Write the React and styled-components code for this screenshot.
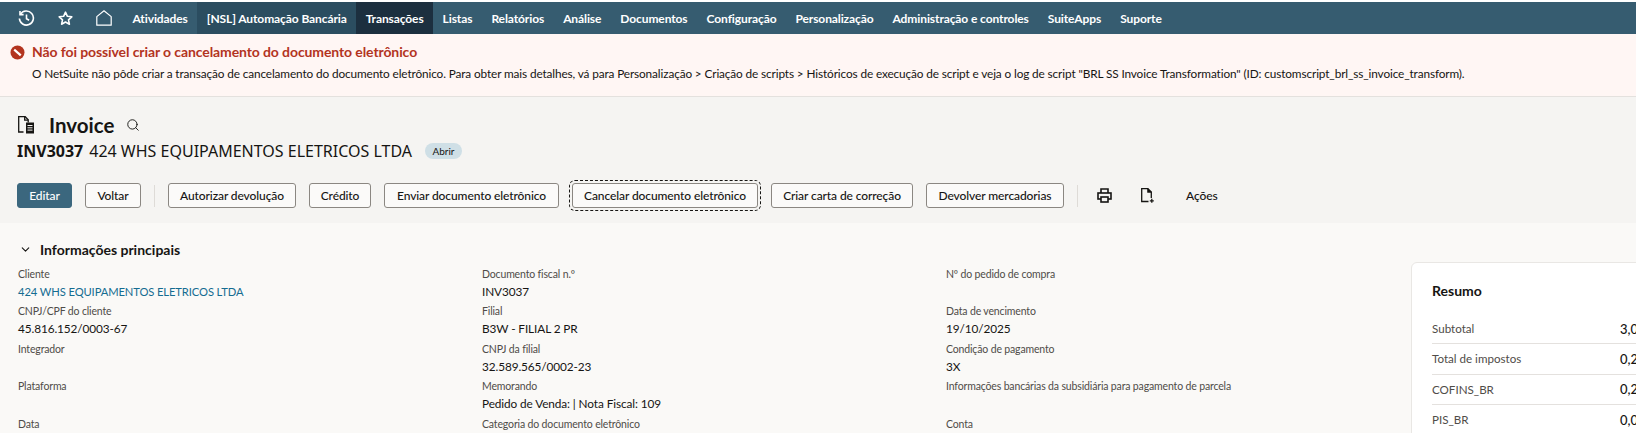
import React from 'react'
import styled, { createGlobalStyle } from 'styled-components'
import { ChevronDown, Search } from 'lucide-react'

const GlobalStyle = createGlobalStyle`
  html, body {
    margin: 0;
    padding: 0;
    background: #fff;
  }
  body {
    font-family: Lato, "Noto Sans", sans-serif;
    color: #161513;
  }
`

const Page = styled.div`
  width: 1636px;
  height: 433px;
  overflow: hidden;
  padding-top: 2px;
  box-sizing: border-box;
`

const Nav = styled.nav`
  height: 32px;
  background: #365c70;
  display: flex;
  align-items: stretch;
`
const NavIcons = styled.div`
  display: flex;
  align-items: center;
  width: 123px;
  padding-left: 18px;
  box-sizing: border-box;
  gap: 23px;
  color: #fff;
`
const NavItem = styled.a`
  display: flex;
  align-items: center;
  padding: 0 9.5px;
  color: #fff;
  font-size: 12px;
  letter-spacing: -0.1px;
  font-weight: 700;
  background: ${p => p.$bg || 'transparent'};
`

const Message = styled.div`
  height: 63px;
  box-sizing: border-box;
  background: #fff6f4;
  border-bottom: 1px solid #e4e1de;
  padding: 9px 10px 0;
`
const MessageTitle = styled.div`
  display: flex;
  align-items: center;
  gap: 7px;
  font-size: 14px;
  letter-spacing: -0.1px;
  font-weight: 700;
  line-height: 18px;
  color: #b3341f;
`
const MessageBody = styled.div`
  margin: 4px 0 0 22px;
  font-size: 11.8px;
  letter-spacing: -0.12px;
  line-height: 18px;
  white-space: nowrap;
`

const Header = styled.header`
  height: 126px;
  box-sizing: border-box;
  background: #f5f4f2;
  padding: 17px 17px 0;
`
const TitleRow = styled.div`
  display: flex;
  align-items: center;
  height: 22px;
`
const Title = styled.h1`
  margin: 0 12px 0 14px;
  font-size: 20.5px;
  font-weight: 700;
  line-height: 22px;
`
const SubRow = styled.div`
  display: flex;
  align-items: center;
  height: 22px;
  margin-top: 4px;
  font-family: "Noto Sans", sans-serif;
  font-size: 16px;
`
const DocNumber = styled.strong`
  font-weight: 700;
  margin-right: 6px;
`
const Badge = styled.span`
  margin-left: 13px;
  width: 37px;
  height: 16px;
  border-radius: 8px;
  background: #cfdfe6;
  font-family: Lato, sans-serif;
  font-size: 10px;
  display: flex;
  align-items: center;
  justify-content: center;
`
const Actions = styled.div`
  display: flex;
  align-items: center;
  gap: 13px;
  margin-top: 21px;
`
const Button = styled.button`
  height: 25px;
  width: ${p => p.$w}px;
  box-sizing: border-box;
  padding: 0;
  border-radius: 3px;
  border: 1px solid ${p => (p.$primary ? '#3b677e' : '#8b8782')};
  background: ${p => (p.$primary ? '#3b677e' : '#fbfaf9')};
  color: ${p => (p.$primary ? '#fff' : '#161513')};
  font-family: inherit;
  font-size: 12px;
  letter-spacing: -0.1px;
  font-weight: 500;
  outline: ${p => (p.$focused ? '1px dashed #161513' : 'none')};
  outline-offset: 2px;
`
const Divider = styled.span`
  width: 1px;
  height: 22px;
  background: #dedbd7;
`
const IconButton = styled.span`
  display: flex;
  align-items: center;
  margin-left: ${p => p.$ml}px;
`
const ActionsLabel = styled.span`
  margin-left: 18px;
  font-size: 12px;
  letter-spacing: -0.1px;
  font-weight: 500;
`

const Main = styled.main`
  height: 210px;
  background: #faf9f7;
  padding: 16px 0 0 18px;
  display: flex;
  box-sizing: border-box;
`
const Details = styled.div`
  width: 1393px;
  flex: none;
`
const SectionHead = styled.div`
  display: flex;
  align-items: center;
  gap: 8px;
  height: 20px;
  font-size: 14px;
  font-weight: 700;
`
const Chevron = styled.span`
  display: flex;
  margin-left: 1px;
`
const Columns = styled.div`
  display: grid;
  grid-template-columns: repeat(3, 464px);
  margin-top: 6px;
`
const Col = styled.div`
  display: flex;
  flex-direction: column;
`
const Field = styled.div`
  height: 37.4px;
`
const Label = styled.div`
  height: 18px;
  line-height: 18px;
  font-size: 10.5px;
  letter-spacing: -0.15px;
  color: #4f4c48;
`
const Value = styled.div`
  height: 18px;
  line-height: 18px;
  font-size: ${p => (p.$link ? '11.2px' : '11.8px')};
  letter-spacing: -0.1px;
  color: ${p => (p.$link ? '#146c91' : '#161513')};
`

const Card = styled.aside`
  flex: none;
  width: 300px;
  height: 220px;
  margin-top: 23px;
  box-sizing: border-box;
  background: #fff;
  border: 1px solid #e9e7e4;
  border-radius: 6px;
  padding: 19px 20px;
`
const CardTitle = styled.div`
  font-size: 14px;
  font-weight: 700;
  line-height: 18px;
  margin-bottom: 14px;
`
const SummaryRow = styled.div`
  display: grid;
  grid-template-columns: 188px 1fr;
  align-items: center;
  height: 30.3px;
  box-sizing: border-box;
  border-bottom: 1px solid #e4e1de;
  font-size: 11.6px;
  color: #4f4c48;
`
const Amount = styled.span`
  font-size: 13px;
  font-weight: 500;
  color: #161513;
`

const HistoryIcon = () => (
  <svg width="17" height="17" viewBox="0 0 17 17" fill="none" stroke="currentColor" strokeWidth="1.6">
    <path d="M2.4 4.4A7 7 0 1 1 1.4 8.5" />
    <path d="M2 1v3.6h3.6" />
    <path d="M8.5 4.5v4.2l2.6 1.5" />
  </svg>
)
const StarIcon = () => (
  <svg width="15" height="15" viewBox="0 0 15 15" fill="none" stroke="currentColor" strokeWidth="1.6" strokeLinejoin="round">
    <path d="M7.5 1.2 9.4 5.3l4.4.5-3.3 3 .9 4.4-3.9-2.2-3.9 2.2.9-4.4-3.3-3 4.4-.5z" />
  </svg>
)
const HomeIcon = () => (
  <svg width="16" height="16" viewBox="0 0 16 16" fill="none" stroke="currentColor" strokeWidth="1.2" strokeLinejoin="round">
    <path d="M.8 6.6 8 .8l7.2 5.8v8.6H.8z" />
  </svg>
)
const InvoiceIcon = () => (
  <svg width="18" height="18" viewBox="0 0 18 18" fill="none" stroke="#161513" strokeWidth="1.3">
    <path d="M6.5 16H1.7V.7h6.5l3 3v2.8" />
    <path d="M7.7.7v3.5h3.5" />
    <rect x="9" y="6.5" width="8" height="11" fill="#161513" stroke="none" />
    <path d="M10.5 9.5h5M10.5 11.8h5M10.5 14.1h5" stroke="#f5f4f2" strokeWidth="1" />
  </svg>
)
const PrintIcon = () => (
  <svg width="15" height="15" viewBox="0 0 15 15" fill="none" stroke="#161513" strokeWidth="1.6">
    <path d="M4 5V1h7v4" />
    <rect x="1" y="5" width="13" height="6" />
    <rect x="4" y="9" width="7" height="5" fill="#f5f4f2" />
  </svg>
)
const NewDocIcon = () => (
  <svg width="14" height="15" viewBox="0 0 14 15" fill="none" stroke="#161513" strokeWidth="1.3">
    <path d="M7.5 13.5H.7V.7h6.2l3.4 3.4v6" />
    <path d="M6.9.7v3.4h3.4" fill="#161513" />
    <path d="M10.8 10.8v4M8.8 12.8h4" />
  </svg>
)
const ErrorIcon = () => (
  <svg width="15" height="15" viewBox="0 0 15 15">
    <circle cx="7.5" cy="7.5" r="7" fill="#b3341f" />
    <path d="M4.2 4.6 10.8 10.4" stroke="#fff" strokeWidth="2.2" />
  </svg>
)

const navItems = ['Atividades', '[NSL] Automação Bancária', 'Transações', 'Listas', 'Relatórios', 'Análise', 'Documentos', 'Configuração', 'Personalização', 'Administração e controles', 'SuiteApps', 'Suporte']
const navBg = { '[NSL] Automação Bancária': '#2b4d60', 'Transações': '#1c2f3f' }

const columns = [
  [['Cliente', '424 WHS EQUIPAMENTOS ELETRICOS LTDA', true], ['CNPJ/CPF do cliente', '45.816.152/0003-67'], ['Integrador'], ['Plataforma'], ['Data']],
  [['Documento fiscal n.º', 'INV3037'], ['Filial', 'B3W - FILIAL 2 PR'], ['CNPJ da filial', '32.589.565/0002-23'], ['Memorando', 'Pedido de Venda: | Nota Fiscal: 109'], ['Categoria do documento eletrônico']],
  [['Nº do pedido de compra'], ['Data de vencimento', '19/10/2025'], ['Condição de pagamento', '3X'], ['Informações bancárias da subsidiária para pagamento de parcela'], ['Conta']],
]

const summary = [['Subtotal', '3,00'], ['Total de impostos', '0,23'], ['COFINS_BR', '0,20'], ['PIS_BR', '0,03']]

const App = () => {
  return (
    <Page>
      <GlobalStyle />
      <Nav>
        <NavIcons>
          <HistoryIcon />
          <StarIcon />
          <HomeIcon />
        </NavIcons>
        {navItems.map(item => (
          <NavItem key={item} $bg={navBg[item]}>{item}</NavItem>
        ))}
      </Nav>
      <Message>
        <MessageTitle><ErrorIcon />Não foi possível criar o cancelamento do documento eletrônico</MessageTitle>
        <MessageBody>O NetSuite não pôde criar a transação de cancelamento do documento eletrônico. Para obter mais detalhes, vá para Personalização &gt; Criação de scripts &gt; Históricos de execução de script e veja o log de script "BRL SS Invoice Transformation" (ID: customscript_brl_ss_invoice_transform).</MessageBody>
      </Message>
      <Header>
        <TitleRow>
          <InvoiceIcon />
          <Title>Invoice</Title>
          <Search size={14} strokeWidth={1.6} />
        </TitleRow>
        <SubRow>
          <DocNumber>INV3037</DocNumber>424 WHS EQUIPAMENTOS ELETRICOS LTDA
          <Badge>Abrir</Badge>
        </SubRow>
        <Actions>
          <Button $primary $w={55}>Editar</Button>
          <Button $w={56}>Voltar</Button>
          <Divider />
          <Button $w={128}>Autorizar devolução</Button>
          <Button $w={62}>Crédito</Button>
          <Button $w={175}>Enviar documento eletrônico</Button>
          <Button $w={186} $focused>Cancelar documento eletrônico</Button>
          <Button $w={142}>Criar carta de correção</Button>
          <Button $w={138}>Devolver mercadorias</Button>
          <Divider />
          <IconButton $ml={6}><PrintIcon /></IconButton>
          <IconButton $ml={16}><NewDocIcon /></IconButton>
          <ActionsLabel>Ações</ActionsLabel>
        </Actions>
      </Header>
      <Main>
        <Details>
          <SectionHead>
            <Chevron><ChevronDown size={13} strokeWidth={2} /></Chevron>
            Informações principais
          </SectionHead>
          <Columns>
            {columns.map((col, i) => (
              <Col key={i}>
                {col.map(([label, value, link]) => (
                  <Field key={label}>
                    <Label>{label}</Label>
                    {value && <Value $link={link}>{value}</Value>}
                  </Field>
                ))}
              </Col>
            ))}
          </Columns>
        </Details>
        <Card>
          <CardTitle>Resumo</CardTitle>
          {summary.map(([label, value]) => (
            <SummaryRow key={label}>{label}<Amount>{value}</Amount></SummaryRow>
          ))}
        </Card>
      </Main>
    </Page>
  )
}

export default App
